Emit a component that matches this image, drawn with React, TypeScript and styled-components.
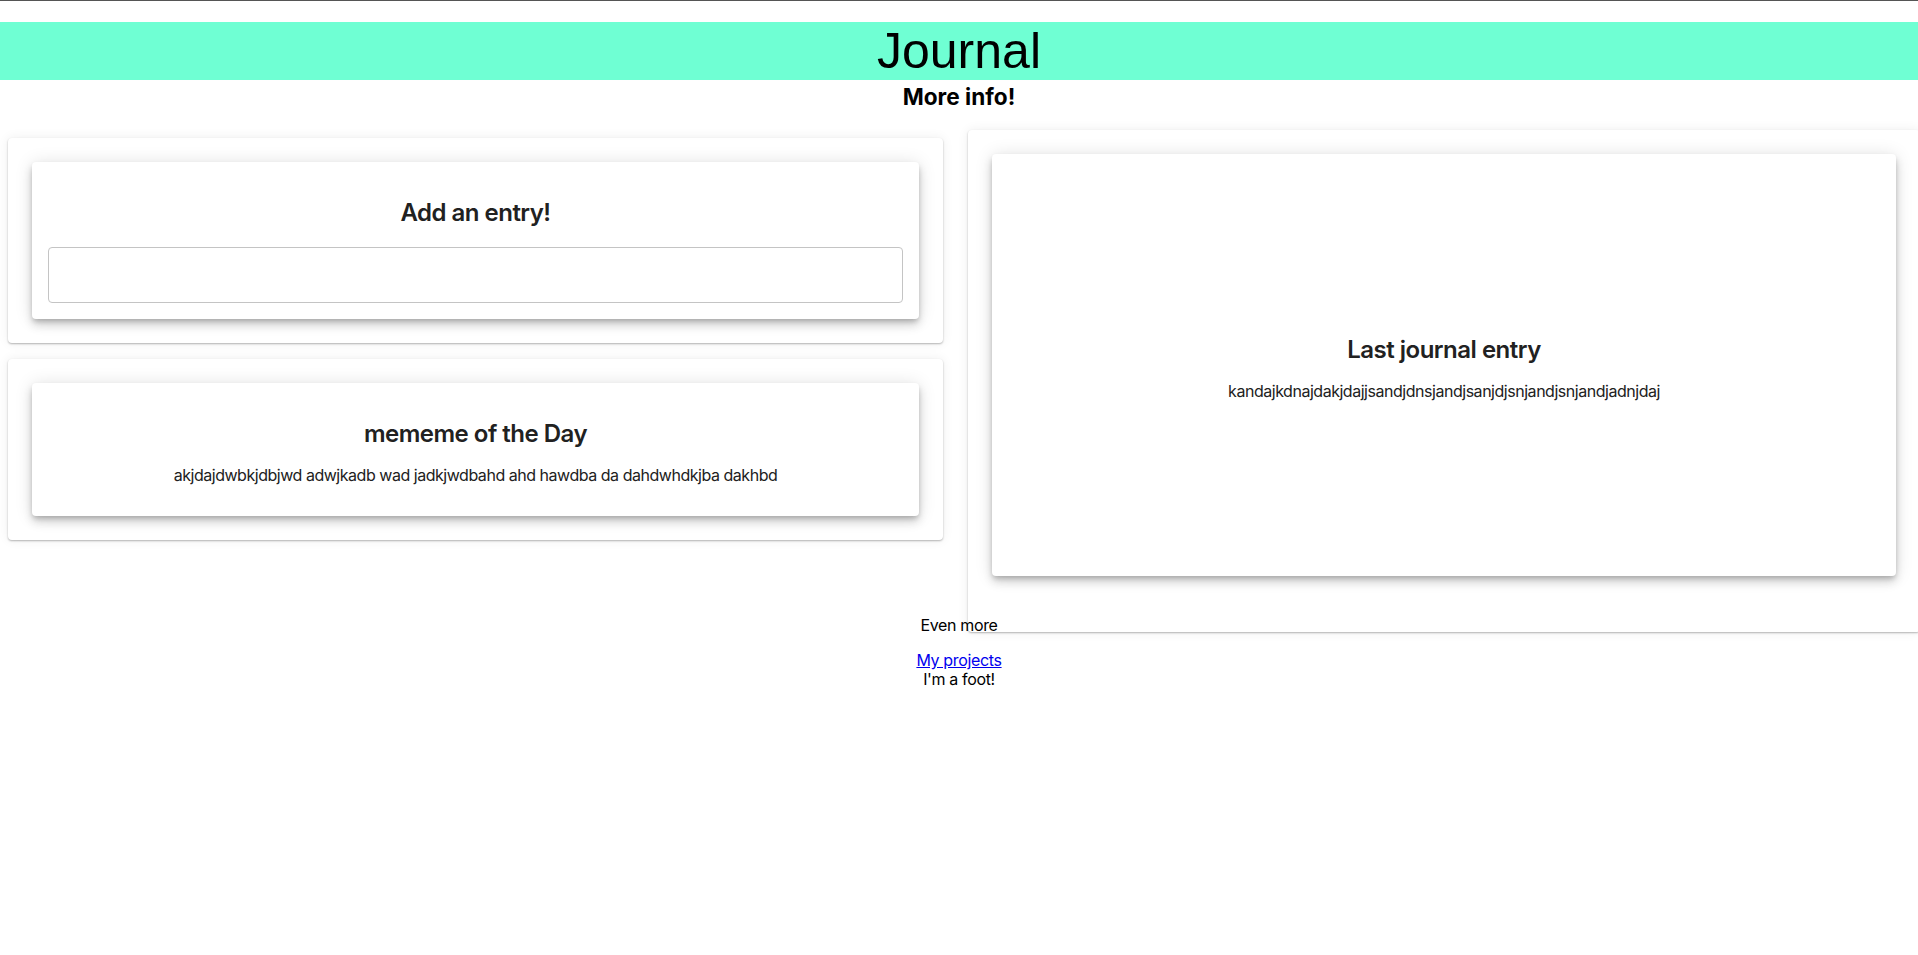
import styled, { createGlobalStyle } from 'styled-components';

const GlobalStyle = createGlobalStyle`
  html, body {
    margin: 0;
    padding: 0;
    background: #ffffff;
    overflow-x: hidden;
  }

  body {
    font-family: Inter, 'Noto Sans', sans-serif;
    font-size: 16px;
    color: #000000;
  }
`;

const Page = styled.div`
  min-height: 955px;
  border-top: 1px solid #555555;
`;

const TitleBar = styled.h1`
  margin: 21px 0 0;
  background-color: #6fffd3;
  font-family: 'Liberation Sans', Arial, sans-serif;
  font-size: 50px;
  font-weight: 400;
  line-height: 58px;
  text-align: center;
  color: #000000;
`;

const SubTitle = styled.h2`
  margin: 3px 0 0;
  font-family: Inter, sans-serif;
  font-size: 22.6px;
  font-weight: 700;
  line-height: 27px;
  text-align: center;
`;

const Row = styled.main`
  margin-top: 20px;
  height: 470px;
  display: grid;
  grid-template-columns: 943px 952px;
  column-gap: 25px;
  align-items: start;
`;

const LeftColumn = styled.section`
  display: flex;
  flex-direction: column;
  gap: 16px;
  padding: 8px 0 0 8px;
`;

const OuterCard = styled.div<{ $tall?: boolean }>`
  background: #ffffff;
  border-radius: 4px;
  padding: ${({ $tall }) => ($tall ? '24px 24px 56px' : '24px')};
  box-shadow: 0 0 12px rgba(0, 0, 0, 0.07), 0 1px 2px rgba(0, 0, 0, 0.28);
`;

const InnerCard = styled.div<{ $height?: number }>`
  background: #ffffff;
  border-radius: 4px;
  padding: 16px;
  text-align: center;
  color: #212121;
  box-shadow: 0 3px 5px -1px rgba(0, 0, 0, 0.2), 0 6px 10px 0 rgba(0, 0, 0, 0.14),
    0 1px 18px 0 rgba(0, 0, 0, 0.12);
  ${({ $height }) =>
    $height
      ? `
    height: ${$height}px;
    box-sizing: border-box;
    display: flex;
    flex-direction: column;
    justify-content: center;
  `
      : ''}
`;

const CardTitle = styled.h2`
  margin: 20px 0;
  font-size: 24px;
  font-weight: 600;
  line-height: 29px;
  letter-spacing: -0.5px;
`;

const CardText = styled.p`
  margin: -2px 0 15px;
  font-size: 16px;
  line-height: 19px;
  letter-spacing: -0.47px;
`;

const EntryInput = styled.input`
  display: block;
  width: 100%;
  height: 56px;
  box-sizing: border-box;
  border: 1px solid #c4c4c4;
  border-radius: 4px;
  font-family: Inter, sans-serif;
  font-size: 16px;
  padding: 0 14px;
  outline: none;
`;

const EvenMore = styled.p`
  margin: 16px 0;
  text-align: center;
  line-height: 19px;
  letter-spacing: -0.35px;
`;

const Footer = styled.footer`
  text-align: center;
  line-height: 19px;
  letter-spacing: -0.35px;

  a {
    color: #0000ee;
  }
`;

export default function App() {
  return (
    <>
      <GlobalStyle />
      <Page>
        <TitleBar>Journal</TitleBar>
        <SubTitle>More info!</SubTitle>
        <Row>
          <LeftColumn>
            <OuterCard>
              <InnerCard>
                <CardTitle>Add an entry!</CardTitle>
                <EntryInput type="text" />
              </InnerCard>
            </OuterCard>
            <OuterCard>
              <InnerCard>
                <CardTitle>mememe of the Day</CardTitle>
                <CardText>akjdajdwbkjdbjwd adwjkadb wad jadkjwdbahd ahd hawdba da dahdwhdkjba dakhbd</CardText>
              </InnerCard>
            </OuterCard>
          </LeftColumn>
          <OuterCard $tall>
            <InnerCard $height={422}>
              <CardTitle>Last journal entry</CardTitle>
              <CardText>kandajkdnajdakjdajjsandjdnsjandjsanjdjsnjandjsnjandjadnjdaj</CardText>
            </InnerCard>
          </OuterCard>
        </Row>
        <EvenMore>Even more</EvenMore>
        <Footer>
          <a href="#projects">My projects</a>
          <div>I'm a foot!</div>
        </Footer>
      </Page>
    </>
  );
}
